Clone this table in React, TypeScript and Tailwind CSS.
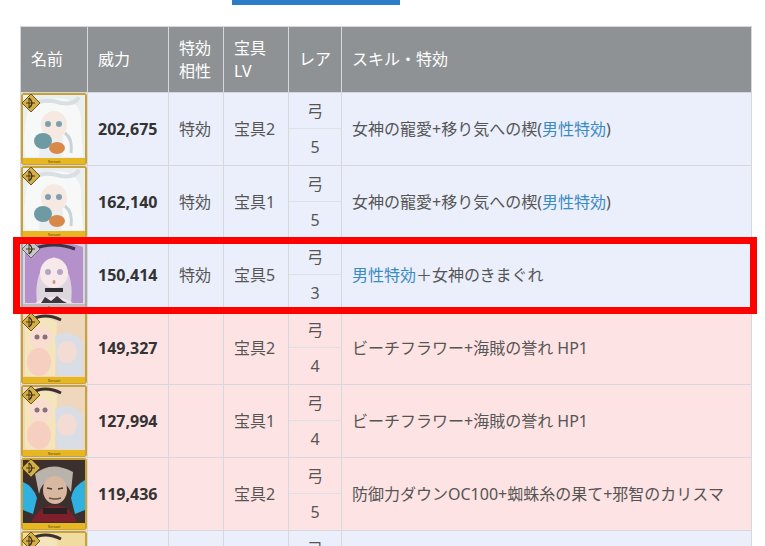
import React from "react";

type Kind = "white" | "purple" | "blonde" | "dark" | "gold";

const Portrait = ({ kind }: { kind: Kind }) => {
  const silver = kind === "purple";
  const frame = silver ? "#a9a9ab" : "#c9a233";
  const strip = silver ? "#bdbdbf" : "#e6b722";

  return (
    <svg width="66" height="72" viewBox="0 0 66 72" className="block">
      <rect x="0" y="0" width="66" height="72" rx="3" fill={frame} />
      <rect x="2" y="2" width="62" height="63" fill="#f3efe9" />
      {kind === "white" && (
        <g>
          <rect x="2" y="2" width="62" height="63" fill="#e9eef0" />
          <path d="M6 20 Q20 2 44 6 Q62 10 60 34 L62 64 L40 64 Q46 40 34 30 Q20 32 18 64 L4 64 Q2 40 6 20 Z" fill="#f7f8f8" />
          <ellipse cx="33" cy="32" rx="13" ry="14" fill="#f6e9e2" />
          <circle cx="27" cy="31" r="3" fill="#7f9fae" />
          <circle cx="38" cy="31" r="3" fill="#7f9fae" />
          <path d="M8 14 Q22 4 40 10 Q54 12 58 4" stroke="#d9dfe2" strokeWidth="4" fill="none" />
          <ellipse cx="22" cy="48" rx="9" ry="8" fill="#6d9aa3" />
          <ellipse cx="36" cy="55" rx="8" ry="6" fill="#d8894a" />
          <path d="M44 40 Q52 46 50 60" stroke="#c9d2d6" strokeWidth="3" fill="none" />
        </g>
      )}
      {kind === "purple" && (
        <g>
          <rect x="2" y="2" width="62" height="63" fill="#ddd6de" />
          <path d="M4 8 Q33 -2 62 8 L62 64 L50 64 Q54 30 33 18 Q12 30 16 64 L4 64 Z" fill="#b591cc" />
          <path d="M12 10 Q33 2 54 10" stroke="#3a3340" strokeWidth="3" fill="none" />
          <ellipse cx="33" cy="34" rx="14" ry="15" fill="#f7e9ea" />
          <circle cx="27" cy="33" r="3" fill="#b7a3c4" />
          <circle cx="39" cy="33" r="3" fill="#b7a3c4" />
          <ellipse cx="33" cy="43" rx="1.5" ry="2" fill="#d38c9a" />
          <rect x="24" y="49" width="18" height="4" fill="#2f2b33" />
          <path d="M14 64 Q33 52 52 64 Z" fill="#f3e6ea" />
          <path d="M20 64 L24 58 L30 62 L36 57 L42 62 L46 64 Z" fill="#3c3640" />
        </g>
      )}
      {(kind === "blonde" || kind === "gold") && (
        <g>
          <rect x="2" y="2" width="62" height="63" fill={kind === "gold" ? "#f0dca0" : "#efd7bd"} />
          <path d="M4 8 Q20 0 36 10 L34 64 L4 64 Z" fill="#f4e5bd" />
          <path d="M10 8 Q24 0 40 8" stroke="#3a3030" strokeWidth="3" fill="none" />
          <ellipse cx="20" cy="26" rx="11" ry="12" fill="#f8ddd0" />
          <circle cx="16" cy="25" r="2.5" fill="#8a6f7e" />
          <circle cx="24" cy="25" r="2.5" fill="#8a6f7e" />
          <path d="M34 24 Q50 16 62 30 L62 64 L36 64 Z" fill="#d9dde6" />
          <ellipse cx="46" cy="40" rx="10" ry="11" fill="#f3dcd4" />
          <ellipse cx="18" cy="50" rx="12" ry="14" fill="#f6cfc0" />
        </g>
      )}
      {kind === "dark" && (
        <g>
          <rect x="2" y="2" width="62" height="63" fill="#3b302e" />
          <path d="M2 24 Q12 28 16 40 L12 56 L2 52 Z" fill="#2fb2e2" />
          <path d="M64 22 Q52 28 50 40 L54 56 L64 52 Z" fill="#2fb2e2" />
          <path d="M14 16 Q30 2 52 14 L50 34 Q44 22 32 22 Q20 24 18 36 Z" fill="#b9b3ab" />
          <ellipse cx="34" cy="32" rx="12" ry="14" fill="#d8b8a0" />
          <path d="M26 30 L31 31 M37 31 L42 30" stroke="#4a3a32" strokeWidth="1.5" />
          <path d="M28 40 Q34 42 40 40" stroke="#6e5446" strokeWidth="1.5" fill="none" />
          <path d="M10 64 Q20 46 34 48 Q48 46 56 64 Z" fill="#7e1f2c" />
          <rect x="22" y="50" width="24" height="6" fill="#2a2222" />
        </g>
      )}
      <rect x="2" y="65" width="62" height="6" fill={strip} />
      <text x="33" y="69.6" fontSize="3.6" textAnchor="middle" fill="#5a4410" fontFamily="Liberation Sans, sans-serif">
        Servant
      </text>
      <polygon points="10,1 19,10 10,19 1,10" fill={silver ? "#c7c7c9" : "#d4ae48"} stroke={silver ? "#6a6a6c" : "#6f5520"} strokeWidth="1" />
      <path d="M8 5 Q14 10 8 15" stroke="#3a2c10" strokeWidth="1.3" fill="none" />
      <path d="M8 5 L8 15 M5 10 L14 10" stroke="#3a2c10" strokeWidth="0.9" />
    </svg>
  );
};

const Link = ({ children }: { children: React.ReactNode }) => (
  <span className="text-[#3a8ac4]">{children}</span>
);

type Row = {
  kind: Kind;
  power: string;
  effect: string;
  np: string;
  cls: string;
  rarity: string;
  skill: React.ReactNode;
  pink: boolean;
};

const rows: Row[] = [
  {
    kind: "white",
    power: "202,675",
    effect: "特効",
    np: "宝具2",
    cls: "弓",
    rarity: "5",
    skill: (
      <>
        女神の寵愛+移り気への楔(<Link>男性特効</Link>)
      </>
    ),
    pink: false,
  },
  {
    kind: "white",
    power: "162,140",
    effect: "特効",
    np: "宝具1",
    cls: "弓",
    rarity: "5",
    skill: (
      <>
        女神の寵愛+移り気への楔(<Link>男性特効</Link>)
      </>
    ),
    pink: false,
  },
  {
    kind: "purple",
    power: "150,414",
    effect: "特効",
    np: "宝具5",
    cls: "弓",
    rarity: "3",
    skill: (
      <>
        <Link>男性特効</Link>＋女神のきまぐれ
      </>
    ),
    pink: false,
  },
  {
    kind: "blonde",
    power: "149,327",
    effect: "",
    np: "宝具2",
    cls: "弓",
    rarity: "4",
    skill: "ビーチフラワー+海賊の誉れ HP1",
    pink: true,
  },
  {
    kind: "blonde",
    power: "127,994",
    effect: "",
    np: "宝具1",
    cls: "弓",
    rarity: "4",
    skill: "ビーチフラワー+海賊の誉れ HP1",
    pink: true,
  },
  {
    kind: "dark",
    power: "119,436",
    effect: "",
    np: "宝具2",
    cls: "弓",
    rarity: "5",
    skill: "防御力ダウンOC100+蜘蛛糸の果て+邪智のカリスマ",
    pink: true,
  },
  // only the top of this row shows
  {
    kind: "gold",
    power: "",
    effect: "",
    np: "",
    cls: "弓",
    rarity: "",
    skill: "",
    pink: false,
  },
];

const App = () => {
  return (
    <div
      className="relative h-[546px] w-[765px] overflow-hidden bg-white text-[16px] text-[#555]"
      style={{ fontFamily: '"Noto Sans", "Noto Sans CJK JP", sans-serif' }}
    >
      {/* top button edge */}
      <div className="ml-[232px] h-[5px] w-[168px] bg-[#2a7dc6]" />

      <div className="mt-[21px] pl-[20px]">
        <table className="w-[731px] table-fixed border-collapse">
          <colgroup>
            <col className="w-[67px]" />
            <col className="w-[81px]" />
            <col className="w-[55px]" />
            <col className="w-[65px]" />
            <col className="w-[53px]" />
            <col className="w-[410px]" />
          </colgroup>
          <thead>
            <tr className="h-[66px] bg-[#8f9295] text-white">
              <th className="border border-[#d6d8db] pl-[10px] text-left font-normal leading-[23px]">名前</th>
              <th className="border border-[#d6d8db] pl-[10px] text-left font-normal leading-[23px]">威力</th>
              <th className="border border-[#d6d8db] pl-[10px] text-left font-normal leading-[23px]">
                特効
                <br />
                相性
              </th>
              <th className="border border-[#d6d8db] pl-[10px] text-left font-normal leading-[23px]">
                宝具
                <br />
                LV
              </th>
              <th className="border border-[#d6d8db] text-center font-normal leading-[23px]">レア</th>
              <th className="border border-[#d6d8db] pl-[10px] text-left font-normal leading-[23px]">スキル・特効</th>
            </tr>
          </thead>
          <tbody>
            {rows.map((r, i) => (
              <tr key={i} className={r.pink ? "h-[72px] bg-[#fde3e3]" : "h-[72px] bg-[#ebeffb]"}>
                <td className="border border-[#d6d8db] p-0 align-middle">
                  <Portrait kind={r.kind} />
                </td>
                <td className="border border-[#d6d8db] pl-[10px] align-middle font-bold text-[#333]">{r.power}</td>
                <td className="border border-[#d6d8db] pl-[10px] align-middle">{r.effect}</td>
                <td className="border border-[#d6d8db] pl-[10px] align-middle">{r.np}</td>
                <td className="border border-[#d6d8db] p-0 align-middle">
                  <div className="flex flex-col text-center">
                    <div className="flex h-[35px] items-center justify-center border-b border-[#dde0e4]">{r.cls}</div>
                    <div className="flex h-[36px] items-center justify-center">{r.rarity}</div>
                  </div>
                </td>
                <td className="border border-[#d6d8db] pl-[10px] align-middle">{r.skill}</td>
              </tr>
            ))}
          </tbody>
        </table>
      </div>

      {/* highlight box */}
      <div className="absolute left-[13px] top-[237px] h-[77px] w-[744px] border-[7px] border-[#ff0000]" />
    </div>
  );
};

export default App;
